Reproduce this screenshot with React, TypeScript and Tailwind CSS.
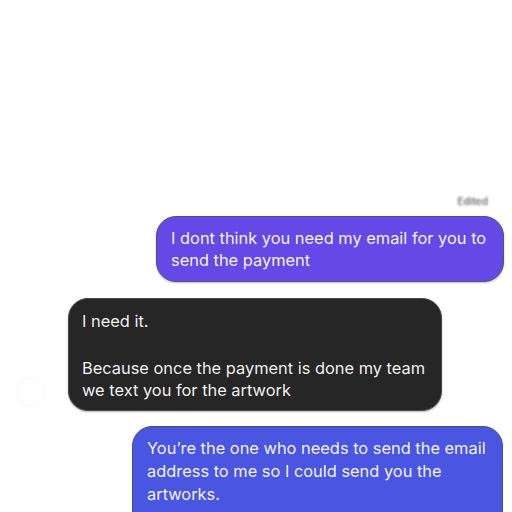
import React from "react";

export default function App() {
  const font = { fontFamily: "Inter, 'Noto Sans', sans-serif" };
  return (
    <div className="w-[512px] h-[512px] overflow-hidden bg-white relative" style={font}>
      <div className="flex flex-col pt-[195px]">
        <div className="flex justify-end pr-[24px] h-[13px] items-start">
          <span className="text-[10px] leading-[12px] text-[#6f6f6f] blur-[1.3px] font-semibold">Edited</span>
        </div>
        <div className="flex justify-end pr-[8px] mt-[8px]">
          <div className="w-[348px] h-[66px] rounded-[20px] bg-[#6549e6] border border-[#55507a] shadow-[0_1px_2px_rgba(0,0,0,0.25)] px-[14px] py-[10px] text-[16.4px] leading-[22px] text-white/95 whitespace-nowrap">
            I dont think you need my email for you to
            <br />
            send the payment
          </div>
        </div>
        <div className="flex items-end mt-[16px]">
          <div className="w-[68px] flex justify-center pb-[4px]">
            <div className="w-[30px] h-[30px] rounded-full border border-[#f6f6f6] mr-[6px]" />
          </div>
          <div className="w-[374px] h-[113px] rounded-[20px] bg-[#262626] border border-[#4a4a4a] shadow-[0_1px_2px_rgba(0,0,0,0.3)] px-[13px] py-[11px] text-[16.4px] leading-[22px] text-white/95 whitespace-nowrap">
            I need it.
            <div className="h-[25px]" />
            Because once the payment is done my team
            <br />
            we text you for the artwork
          </div>
        </div>
        <div className="flex justify-end pr-[9px] mt-[15px]">
          <div className="w-[371px] h-[110px] rounded-[20px] bg-[#4a55e2] border border-[#4b4f86] px-[14px] pt-[10px] text-[16.4px] leading-[23px] text-white/95 whitespace-nowrap">
            You’re the one who needs to send the email
            <br />
            address to me so I could send you the
            <br />
            artworks.
          </div>
        </div>
      </div>
    </div>
  );
}
